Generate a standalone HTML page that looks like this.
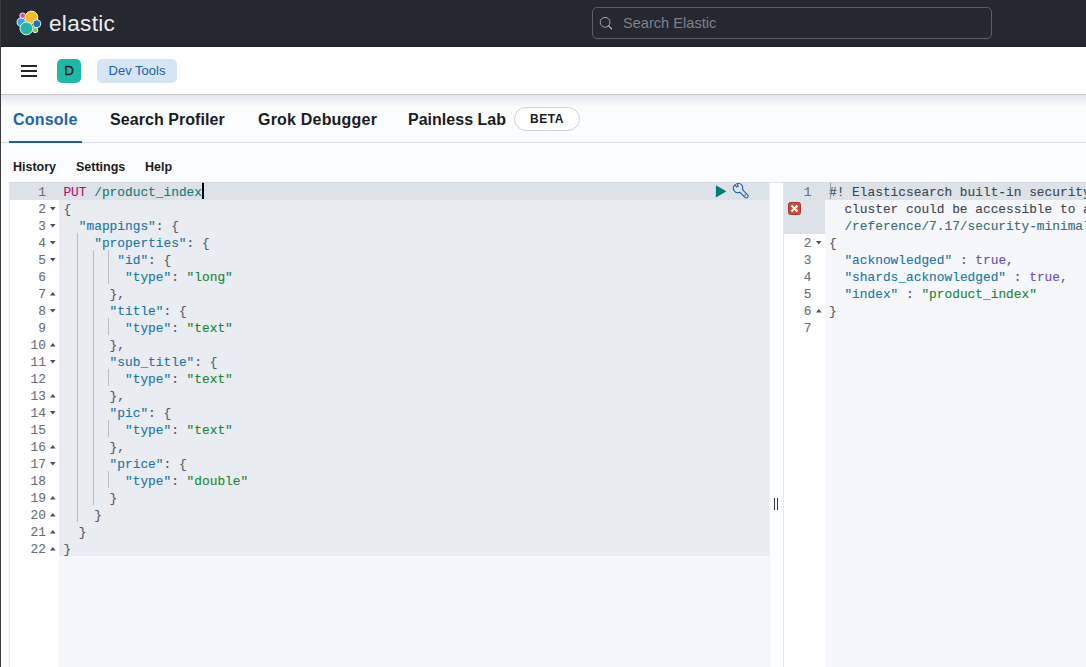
<!DOCTYPE html>
<html><head><meta charset="utf-8">
<style>
*{box-sizing:border-box;margin:0;padding:0}
html,body{width:1086px;height:667px;overflow:hidden;background:#fbfcfd;font-family:"Liberation Sans",sans-serif;position:relative}
.abs{position:absolute}
#hdr{left:0;top:0;width:1086px;height:47px;background:#25282f;border-bottom:1px solid #1b1d22}
#logo-t{left:49px;top:10.8px;color:#ebecee;font-size:22.6px;letter-spacing:0.3px}
#search{left:592px;top:7px;width:400px;height:32px;border:1px solid #5a5f6a;border-radius:5px;background:#25282f}
#search span{position:absolute;left:30px;top:7px;color:#7d828b;font-size:14.6px}
#bar2{left:0;top:47px;width:1086px;height:48px;background:#fff;border-bottom:1px solid #c9cacd}
#shadow{left:0;top:95px;width:1086px;height:12px;background:linear-gradient(#e4e5e8,#fbfcfd)}
.ham{left:21px;width:16px;height:1.6px;background:#24262b}
#avatar{left:57px;top:59px;width:24px;height:24px;border-radius:5px;background:#20b8a6;color:#1a1c21;font-size:13.5px;font-weight:normal;-webkit-text-stroke:0.35px #1a1c21;text-align:center;line-height:24px}
#crumb{left:97px;top:59px;width:80px;height:24px;border-radius:5px;background:#d6e5f3;color:#1d5f9f;font-size:13px;text-align:center;line-height:24px}
#tabsbg{left:0;top:95px;width:1086px;height:88px;background:#fbfcfd}
.tab{top:111px;font-size:16px;font-weight:bold;color:#1a1c21;letter-spacing:0.2px}
#tabline{left:0;top:142px;width:1086px;height:1px;background:#d9dce0}
#tabul{left:9px;top:140.5px;width:73px;height:2px;background:#1b6299}
#beta{left:514px;top:107px;width:66px;height:24px;border:1px solid #cdd1d7;border-radius:12px;background:#fff;font-size:12px;font-weight:bold;text-align:center;line-height:22px;color:#1a1c21;letter-spacing:0.6px}
.tb{top:160px;font-size:12.5px;font-weight:bold;color:#1a1c21}
#lstrip{left:0;top:0;width:1px;height:667px;background:#3c3c3c}
#lstrip2{left:0;top:0;width:1px;height:47px;background:#5b5e66}
.mono{font-family:"Liberation Mono",monospace;font-size:12.83px;-webkit-text-stroke:0.12px currentColor}
#ed1{left:10px;top:182px;width:759px;height:485px;background:#f5f7fa;overflow:hidden}
#gut1{left:0;top:0;width:49px;height:485px;background:#fff}
#req{left:49px;top:0;width:710px;height:374px;background:#e9ecf1}
.row{position:absolute;height:17px;line-height:17px;white-space:pre;padding-top:2px}
.ln{position:absolute;left:0;width:49px;height:17px;line-height:17px;padding-top:2px;text-align:right;padding-right:13px;color:#6a6f78}
#act1{left:0;top:0;width:759px;height:17.6px;background:#dde2e8}
.fa{position:absolute;left:39.8px;width:0;height:0;border-left:2.9px solid transparent;border-right:2.9px solid transparent;margin-top:1px}
.fd{border-top:3.3px solid #4a4f57}
.fu{border-bottom:3.3px solid #4a4f57}
.ig{position:absolute;width:1px;height:17px;background:#b9bcc1}
#cursor1{left:191.5px;top:0;width:2px;height:17px;background:#000}
#strip{left:769px;top:182px;width:15px;height:485px;background:#fcfdfe;border-left:1px solid #eef0f3;border-right:1px solid #e6e8ec}
.hb{top:498px;width:1.2px;height:12px;background:#343741}
#ed2{left:784px;top:182px;width:302px;height:485px;background:#f5f7fa;overflow:hidden}
#gut2{left:0;top:0;width:40.5px;height:485px;background:#fff}
#act2{left:0;top:0;width:302px;height:17.6px;background:#dde2e8}
#actg2{left:0;top:17px;width:40.5px;height:34.6px;background:#dde2e8}
.ln2{width:40.5px}
.fa2{left:31.8px}
#cursor2{left:45.5px;top:0;width:1.2px;height:17px;background:#9aa0a8}
</style></head><body>
<div id="hdr" class="abs"></div>
<div id="lstrip2" class="abs"></div>
<svg class="abs" style="left:16px;top:10px" width="28" height="28" viewBox="0 0 28 28">
 <circle cx="15.5" cy="7.4" r="6.3" fill="#f2bd22" stroke="#fff" stroke-width="0.9"/>
 <circle cx="6.6" cy="5.8" r="2.8" fill="#e9478d" stroke="#fff" stroke-width="0.9"/>
 <circle cx="5.2" cy="12.1" r="4.1" fill="#36a5e3" stroke="#fff" stroke-width="0.9"/>
 <circle cx="20.8" cy="13.7" r="4" fill="#1f6fc4" stroke="#fff" stroke-width="0.9"/>
 <circle cx="10.4" cy="18.4" r="6.4" fill="#22b7a6" stroke="#fff" stroke-width="0.9"/>
 <circle cx="19.2" cy="20.1" r="2.6" fill="#86c440" stroke="#fff" stroke-width="0.9"/>
</svg>
<div id="logo-t" class="abs">elastic</div>
<div id="search" class="abs">
 <svg style="position:absolute;left:6px;top:8px" width="16" height="16" viewBox="0 0 16 16"><circle cx="6.1" cy="6.3" r="4.9" fill="none" stroke="#a3a7ae" stroke-width="1"/><path d="M9.7 9.9 L12.6 12.9" stroke="#b5b9bf" stroke-width="1.3" stroke-linecap="round"/></svg>
 <span>Search Elastic</span>
</div>
<div id="bar2" class="abs"></div>
<div class="abs ham" style="top:65px"></div>
<div class="abs ham" style="top:70px"></div>
<div class="abs ham" style="top:75px"></div>
<div id="avatar" class="abs">D</div>
<div id="crumb" class="abs">Dev Tools</div>
<div id="tabsbg" class="abs"></div>
<div id="shadow" class="abs"></div>
<div class="abs tab" style="left:13px;color:#1a66a6">Console</div>
<div class="abs tab" style="left:110px;letter-spacing:0.06px">Search Profiler</div>
<div class="abs tab" style="left:258px">Grok Debugger</div>
<div class="abs tab" style="left:408px;letter-spacing:0.02px">Painless Lab</div>
<div id="beta" class="abs">BETA</div>
<div id="tabline" class="abs"></div>
<div id="tabul" class="abs"></div>
<div class="abs tb" style="left:13px">History</div>
<div class="abs tb" style="left:76px">Settings</div>
<div class="abs tb" style="left:145px">Help</div>

<div id="ed1" class="abs mono">
 <div id="gut1" class="abs"></div>
 <div id="req" class="abs"></div>
 <div id="act1" class="abs"></div>
<div class="ln" style="top:0px">1</div>
<div class="ln" style="top:17px">2</div>
<svg class="abs" style="left:39.8px;top:24.6px" width="6" height="4" viewBox="0 0 6 4"><polygon points="0,0 5.6,0 2.8,3.4" fill="#4a4f57"/></svg>
<div class="ln" style="top:34px">3</div>
<svg class="abs" style="left:39.8px;top:41.6px" width="6" height="4" viewBox="0 0 6 4"><polygon points="0,0 5.6,0 2.8,3.4" fill="#4a4f57"/></svg>
<div class="ln" style="top:51px">4</div>
<svg class="abs" style="left:39.8px;top:58.6px" width="6" height="4" viewBox="0 0 6 4"><polygon points="0,0 5.6,0 2.8,3.4" fill="#4a4f57"/></svg>
<div class="ln" style="top:68px">5</div>
<svg class="abs" style="left:39.8px;top:75.6px" width="6" height="4" viewBox="0 0 6 4"><polygon points="0,0 5.6,0 2.8,3.4" fill="#4a4f57"/></svg>
<div class="ln" style="top:85px">6</div>
<div class="ln" style="top:102px">7</div>
<svg class="abs" style="left:39.8px;top:109.6px" width="6" height="4" viewBox="0 0 6 4"><polygon points="0,3.4 5.6,3.4 2.8,0" fill="#4a4f57"/></svg>
<div class="ln" style="top:119px">8</div>
<svg class="abs" style="left:39.8px;top:126.6px" width="6" height="4" viewBox="0 0 6 4"><polygon points="0,0 5.6,0 2.8,3.4" fill="#4a4f57"/></svg>
<div class="ln" style="top:136px">9</div>
<div class="ln" style="top:153px">10</div>
<svg class="abs" style="left:39.8px;top:160.6px" width="6" height="4" viewBox="0 0 6 4"><polygon points="0,3.4 5.6,3.4 2.8,0" fill="#4a4f57"/></svg>
<div class="ln" style="top:170px">11</div>
<svg class="abs" style="left:39.8px;top:177.6px" width="6" height="4" viewBox="0 0 6 4"><polygon points="0,0 5.6,0 2.8,3.4" fill="#4a4f57"/></svg>
<div class="ln" style="top:187px">12</div>
<div class="ln" style="top:204px">13</div>
<svg class="abs" style="left:39.8px;top:211.6px" width="6" height="4" viewBox="0 0 6 4"><polygon points="0,3.4 5.6,3.4 2.8,0" fill="#4a4f57"/></svg>
<div class="ln" style="top:221px">14</div>
<svg class="abs" style="left:39.8px;top:228.6px" width="6" height="4" viewBox="0 0 6 4"><polygon points="0,0 5.6,0 2.8,3.4" fill="#4a4f57"/></svg>
<div class="ln" style="top:238px">15</div>
<div class="ln" style="top:255px">16</div>
<svg class="abs" style="left:39.8px;top:262.6px" width="6" height="4" viewBox="0 0 6 4"><polygon points="0,3.4 5.6,3.4 2.8,0" fill="#4a4f57"/></svg>
<div class="ln" style="top:272px">17</div>
<svg class="abs" style="left:39.8px;top:279.6px" width="6" height="4" viewBox="0 0 6 4"><polygon points="0,0 5.6,0 2.8,3.4" fill="#4a4f57"/></svg>
<div class="ln" style="top:289px">18</div>
<div class="ln" style="top:306px">19</div>
<svg class="abs" style="left:39.8px;top:313.6px" width="6" height="4" viewBox="0 0 6 4"><polygon points="0,3.4 5.6,3.4 2.8,0" fill="#4a4f57"/></svg>
<div class="ln" style="top:323px">20</div>
<svg class="abs" style="left:39.8px;top:330.6px" width="6" height="4" viewBox="0 0 6 4"><polygon points="0,3.4 5.6,3.4 2.8,0" fill="#4a4f57"/></svg>
<div class="ln" style="top:340px">21</div>
<svg class="abs" style="left:39.8px;top:347.6px" width="6" height="4" viewBox="0 0 6 4"><polygon points="0,3.4 5.6,3.4 2.8,0" fill="#4a4f57"/></svg>
<div class="ln" style="top:357px">22</div>
<svg class="abs" style="left:39.8px;top:364.6px" width="6" height="4" viewBox="0 0 6 4"><polygon points="0,3.4 5.6,3.4 2.8,0" fill="#4a4f57"/></svg>
<div class="ig" style="left:67.3px;top:51px"></div>
<div class="ig" style="left:67.3px;top:68px"></div>
<div class="ig" style="left:82.7px;top:68px"></div>
<div class="ig" style="left:98.1px;top:68px"></div>
<div class="ig" style="left:67.3px;top:85px"></div>
<div class="ig" style="left:82.7px;top:85px"></div>
<div class="ig" style="left:98.1px;top:85px"></div>
<div class="ig" style="left:67.3px;top:102px"></div>
<div class="ig" style="left:82.7px;top:102px"></div>
<div class="ig" style="left:67.3px;top:119px"></div>
<div class="ig" style="left:82.7px;top:119px"></div>
<div class="ig" style="left:67.3px;top:136px"></div>
<div class="ig" style="left:82.7px;top:136px"></div>
<div class="ig" style="left:98.1px;top:136px"></div>
<div class="ig" style="left:67.3px;top:153px"></div>
<div class="ig" style="left:82.7px;top:153px"></div>
<div class="ig" style="left:67.3px;top:170px"></div>
<div class="ig" style="left:82.7px;top:170px"></div>
<div class="ig" style="left:67.3px;top:187px"></div>
<div class="ig" style="left:82.7px;top:187px"></div>
<div class="ig" style="left:98.1px;top:187px"></div>
<div class="ig" style="left:67.3px;top:204px"></div>
<div class="ig" style="left:82.7px;top:204px"></div>
<div class="ig" style="left:67.3px;top:221px"></div>
<div class="ig" style="left:82.7px;top:221px"></div>
<div class="ig" style="left:67.3px;top:238px"></div>
<div class="ig" style="left:82.7px;top:238px"></div>
<div class="ig" style="left:98.1px;top:238px"></div>
<div class="ig" style="left:67.3px;top:255px"></div>
<div class="ig" style="left:82.7px;top:255px"></div>
<div class="ig" style="left:67.3px;top:272px"></div>
<div class="ig" style="left:82.7px;top:272px"></div>
<div class="ig" style="left:67.3px;top:289px"></div>
<div class="ig" style="left:82.7px;top:289px"></div>
<div class="ig" style="left:98.1px;top:289px"></div>
<div class="ig" style="left:67.3px;top:306px"></div>
<div class="ig" style="left:82.7px;top:306px"></div>
<div class="ig" style="left:67.3px;top:323px"></div>
<div class="row" style="left:53.4px;top:0px"><span style="color:#c4086c">PUT</span> <span style="color:#127a78">/product_index</span></div>
<div class="row" style="left:53.4px;top:17px"><span style="color:#545b66">{</span></div>
<div class="row" style="left:53.4px;top:34px">  <span style="color:#1b76a5">&quot;mappings&quot;</span><span style="color:#545b66">: {</span></div>
<div class="row" style="left:53.4px;top:51px">    <span style="color:#1b76a5">&quot;properties&quot;</span><span style="color:#545b66">: {</span></div>
<div class="row" style="left:53.4px;top:68px">       <span style="color:#1b76a5">&quot;id&quot;</span><span style="color:#545b66">: {</span></div>
<div class="row" style="left:53.4px;top:85px">        <span style="color:#1b76a5">&quot;type&quot;</span><span style="color:#545b66">: </span><span style="color:#1c8535">&quot;long&quot;</span></div>
<div class="row" style="left:53.4px;top:102px">      <span style="color:#545b66">},</span></div>
<div class="row" style="left:53.4px;top:119px">      <span style="color:#1b76a5">&quot;title&quot;</span><span style="color:#545b66">: {</span></div>
<div class="row" style="left:53.4px;top:136px">        <span style="color:#1b76a5">&quot;type&quot;</span><span style="color:#545b66">: </span><span style="color:#1c8535">&quot;text&quot;</span></div>
<div class="row" style="left:53.4px;top:153px">      <span style="color:#545b66">},</span></div>
<div class="row" style="left:53.4px;top:170px">      <span style="color:#1b76a5">&quot;sub_title&quot;</span><span style="color:#545b66">: {</span></div>
<div class="row" style="left:53.4px;top:187px">        <span style="color:#1b76a5">&quot;type&quot;</span><span style="color:#545b66">: </span><span style="color:#1c8535">&quot;text&quot;</span></div>
<div class="row" style="left:53.4px;top:204px">      <span style="color:#545b66">},</span></div>
<div class="row" style="left:53.4px;top:221px">      <span style="color:#1b76a5">&quot;pic&quot;</span><span style="color:#545b66">: {</span></div>
<div class="row" style="left:53.4px;top:238px">        <span style="color:#1b76a5">&quot;type&quot;</span><span style="color:#545b66">: </span><span style="color:#1c8535">&quot;text&quot;</span></div>
<div class="row" style="left:53.4px;top:255px">      <span style="color:#545b66">},</span></div>
<div class="row" style="left:53.4px;top:272px">      <span style="color:#1b76a5">&quot;price&quot;</span><span style="color:#545b66">: {</span></div>
<div class="row" style="left:53.4px;top:289px">        <span style="color:#1b76a5">&quot;type&quot;</span><span style="color:#545b66">: </span><span style="color:#1c8535">&quot;double&quot;</span></div>
<div class="row" style="left:53.4px;top:306px">      <span style="color:#545b66">}</span></div>
<div class="row" style="left:53.4px;top:323px">    <span style="color:#545b66">}</span></div>
<div class="row" style="left:53.4px;top:340px">  <span style="color:#545b66">}</span></div>
<div class="row" style="left:53.4px;top:357px"><span style="color:#545b66">}</span></div>
 <div id="cursor1" class="abs"></div>
 <svg class="abs" style="left:705px;top:2.7px" width="12" height="13" viewBox="0 0 12 13"><path d="M1 0.8 Q0.8 0.3 1.4 0.5 L10.8 5.9 Q11.4 6.3 10.8 6.7 L1.4 12.2 Q0.8 12.5 0.8 11.9 Z" fill="#017d73"/></svg>
 <svg class="abs" style="left:722px;top:0px" width="20" height="20" viewBox="0 0 20 20"><path d="M3.08 2.6 L4.53 5.11 L6.27 4.11 L4.82 1.6 A4.5 4.5 0 0 1 10.42 7.54 L15.64 12.76 A1.9 1.9 0 0 1 12.96 15.44 L7.74 10.22 A4.5 4.5 0 0 1 3.08 2.6 Z" fill="none" stroke="#1b5f98" stroke-width="1.05" stroke-linejoin="round"/><circle cx="13.2" cy="13.1" r="0.8" fill="#1b5f98"/></svg>
</div>

<div id="strip" class="abs"></div>
<div class="abs hb" style="left:774px"></div>
<div class="abs hb" style="left:777px"></div>
<div id="ed2" class="abs mono">
 <div id="gut2" class="abs"></div>
 <div id="act2" class="abs"></div>
 <div id="actg2" class="abs"></div>
<div class="ln ln2" style="top:0px">1</div>
<div class="row" style="left:45px;top:0px"><span style="color:#3f4650">#! Elasticsearch built-in security features are not enabled. Without authentication, your</span></div>
<div class="row" style="left:45px;top:17px"><span style="color:#3f4650">  cluster could be accessible to anyone. See</span></div>
<div class="row" style="left:45px;top:34px"><span style="color:#3a6f72">  /reference/7.17/security-minimal-setup.html to enable security.</span></div>
<div class="ln ln2" style="top:51px">2</div>
<svg class="abs" style="left:31.8px;top:58.6px" width="6" height="4" viewBox="0 0 6 4"><polygon points="0,0 5.6,0 2.8,3.4" fill="#4a4f57"/></svg>
<div class="row" style="left:45px;top:51px"><span style="color:#545b66">{</span></div>
<div class="ln ln2" style="top:68px">3</div>
<div class="row" style="left:45px;top:68px">  <span style="color:#1b76a5">&quot;acknowledged&quot;</span><span style="color:#545b66"> : </span><span style="color:#6a4db8">true</span><span style="color:#545b66">,</span></div>
<div class="ln ln2" style="top:85px">4</div>
<div class="row" style="left:45px;top:85px">  <span style="color:#1b76a5">&quot;shards_acknowledged&quot;</span><span style="color:#545b66"> : </span><span style="color:#6a4db8">true</span><span style="color:#545b66">,</span></div>
<div class="ln ln2" style="top:102px">5</div>
<div class="row" style="left:45px;top:102px">  <span style="color:#1b76a5">&quot;index&quot;</span><span style="color:#545b66"> : </span><span style="color:#1c8535">&quot;product_index&quot;</span></div>
<div class="ln ln2" style="top:119px">6</div>
<svg class="abs" style="left:31.8px;top:126.6px" width="6" height="4" viewBox="0 0 6 4"><polygon points="0,3.4 5.6,3.4 2.8,0" fill="#4a4f57"/></svg>
<div class="row" style="left:45px;top:119px"><span style="color:#545b66">}</span></div>
<div class="ln ln2" style="top:136px">7</div>
<div class="row" style="left:45px;top:136px"></div>
 <div id="cursor2" class="abs"></div>
 <svg class="abs" style="left:3.8px;top:20px" width="13" height="13" viewBox="0 0 13 13"><rect x="0.5" y="0.5" width="12" height="12" rx="2" fill="#cd4a3b" stroke="#9e3a2e"/><path d="M3.5 3.5 L9.5 9.5 M9.5 3.5 L3.5 9.5" stroke="#fff" stroke-width="2.1"/></svg>
</div>
<div class="abs" style="left:9px;top:182px;width:1px;height:485px;background:#e4e6ea"></div>
<div class="abs" style="left:9px;top:182px;width:1077px;height:1px;background:#d5d9df;opacity:0.8"></div>
<div id="lstrip" class="abs"></div>
</body></html>
